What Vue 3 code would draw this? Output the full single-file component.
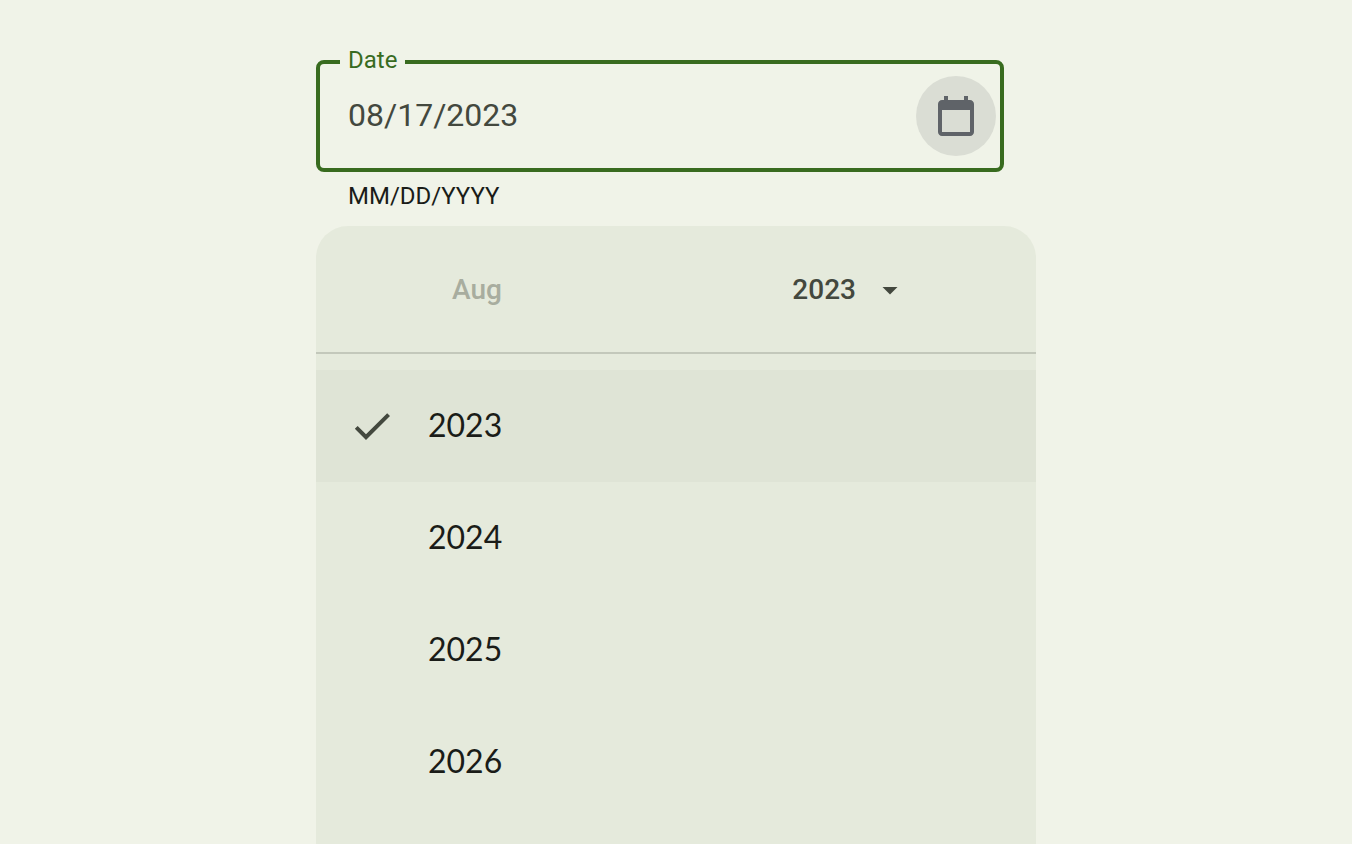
<script setup>
import { ref } from 'vue'

const date = ref('08/17/2023')
const years = [2023, 2024, 2025, 2026]
const selectedYear = ref(2023)
</script>

<template>
  <main class="page">
    <div class="picker">
      <div class="field">
        <label class="field-label" for="date">Date</label>
        <input id="date" v-model="date" class="field-input" type="text" aria-describedby="date-hint" />
        <button class="icon-button" type="button" aria-label="Open calendar">
          <svg class="icon" viewBox="0 0 24 24" aria-hidden="true">
            <path d="M19 4h-1V2h-2v2H8V2H6v2H5c-1.1 0-2 .9-2 2v14c0 1.1.9 2 2 2h14c1.1 0 2-.9 2-2V6c0-1.1-.9-2-2-2zm0 16H5V9h14z" />
          </svg>
        </button>
      </div>
      <p id="date-hint" class="hint">MM/DD/YYYY</p>

      <section class="menu">
        <header class="menu-header">
          <button class="menu-button" type="button" disabled>Aug</button>
          <button class="menu-button" type="button" aria-expanded="true">
            {{ selectedYear }}
            <svg class="arrow" viewBox="0 0 24 24" aria-hidden="true">
              <path d="M7 10l5 5 5-5z" />
            </svg>
          </button>
        </header>
        <ul class="years">
          <li v-for="year in years" :key="year">
            <button
              class="year"
              :class="{ selected: year === selectedYear }"
              type="button"
              :aria-pressed="year === selectedYear"
              @click="selectedYear = year"
            >
              <span class="check">
                <svg v-if="year === selectedYear" class="icon" viewBox="0 0 24 24" aria-hidden="true">
                  <path d="M9 16.17L4.83 12l-1.42 1.41L9 19 21 7l-1.41-1.41z" />
                </svg>
              </span>
              <span class="year-text">{{ year }}</span>
            </button>
          </li>
        </ul>
      </section>
    </div>
  </main>
</template>

<style>
body {
  background: #f0f3e8;
}
</style>

<style scoped>
.page {
  box-sizing: border-box;
  display: flex;
  justify-content: center;
  min-height: 100vh;
  padding-top: 60px;
  color: #1a1c18;
  font-family: Roboto, "Liberation Sans", sans-serif;
}

.picker {
  display: flex;
  flex-direction: column;
  width: 100%;
  max-width: 720px;
}

.field {
  position: relative;
  display: flex;
  align-items: center;
  margin-right: 32px;
  padding: 12px 4px 12px 28px;
  border: 4px solid #386b1f;
  border-radius: 8px;
}

.field-label {
  position: absolute;
  top: -20px;
  left: 20px;
  padding: 0 8px;
  background: #f0f3e8;
  color: #386b1f;
  font-size: 24px;
  line-height: 32px;
}

.field-input {
  flex: 1;
  min-width: 0;
  padding: 0 0 2px;
  border: 0;
  outline: 0;
  background: transparent;
  color: #43483e;
  font: 32px/48px Roboto, "Liberation Sans", sans-serif;
}

.icon-button {
  display: flex;
  align-items: center;
  justify-content: center;
  width: 80px;
  height: 80px;
  padding: 0;
  border: 0;
  border-radius: 50%;
  background: #daddd4;
  color: #5f6368;
}

.icon {
  display: block;
  width: 48px;
  height: 48px;
  fill: currentColor;
}

.hint {
  margin: 8px 32px 14px;
  font-size: 24px;
  line-height: 32px;
}

.menu {
  flex: 1;
  overflow: hidden;
  border-radius: 32px 32px 0 0;
  background: #e5eadc;
}

.menu-header {
  display: flex;
  align-items: center;
  justify-content: space-between;
  padding: 44px 128px 42px 136px;
  border-bottom: 2px solid #c3c8bb;
}

.menu-button {
  display: flex;
  align-items: center;
  gap: 16px;
  padding: 0;
  border: 0;
  background: transparent;
  color: #43483e;
  font: 500 28px/40px Roboto, "Liberation Sans", sans-serif;
}

.menu-button:disabled {
  color: #a8ad9f;
}

.arrow {
  width: 36px;
  height: 36px;
  fill: currentColor;
}

.years {
  margin: 0;
  padding: 16px 0 0;
  list-style: none;
}

.year {
  display: flex;
  align-items: center;
  gap: 32px;
  width: 100%;
  height: 112px;
  padding: 0 32px;
  border: 0;
  background: transparent;
  color: #1a1c18;
  font: 32px/48px Lato, "Liberation Sans", sans-serif;
}

.year.selected {
  background: #dfe4d6;
}

.year-text {
  padding-bottom: 2px;
}

.check {
  width: 48px;
  height: 48px;
  color: #43483e;
}
</style>
